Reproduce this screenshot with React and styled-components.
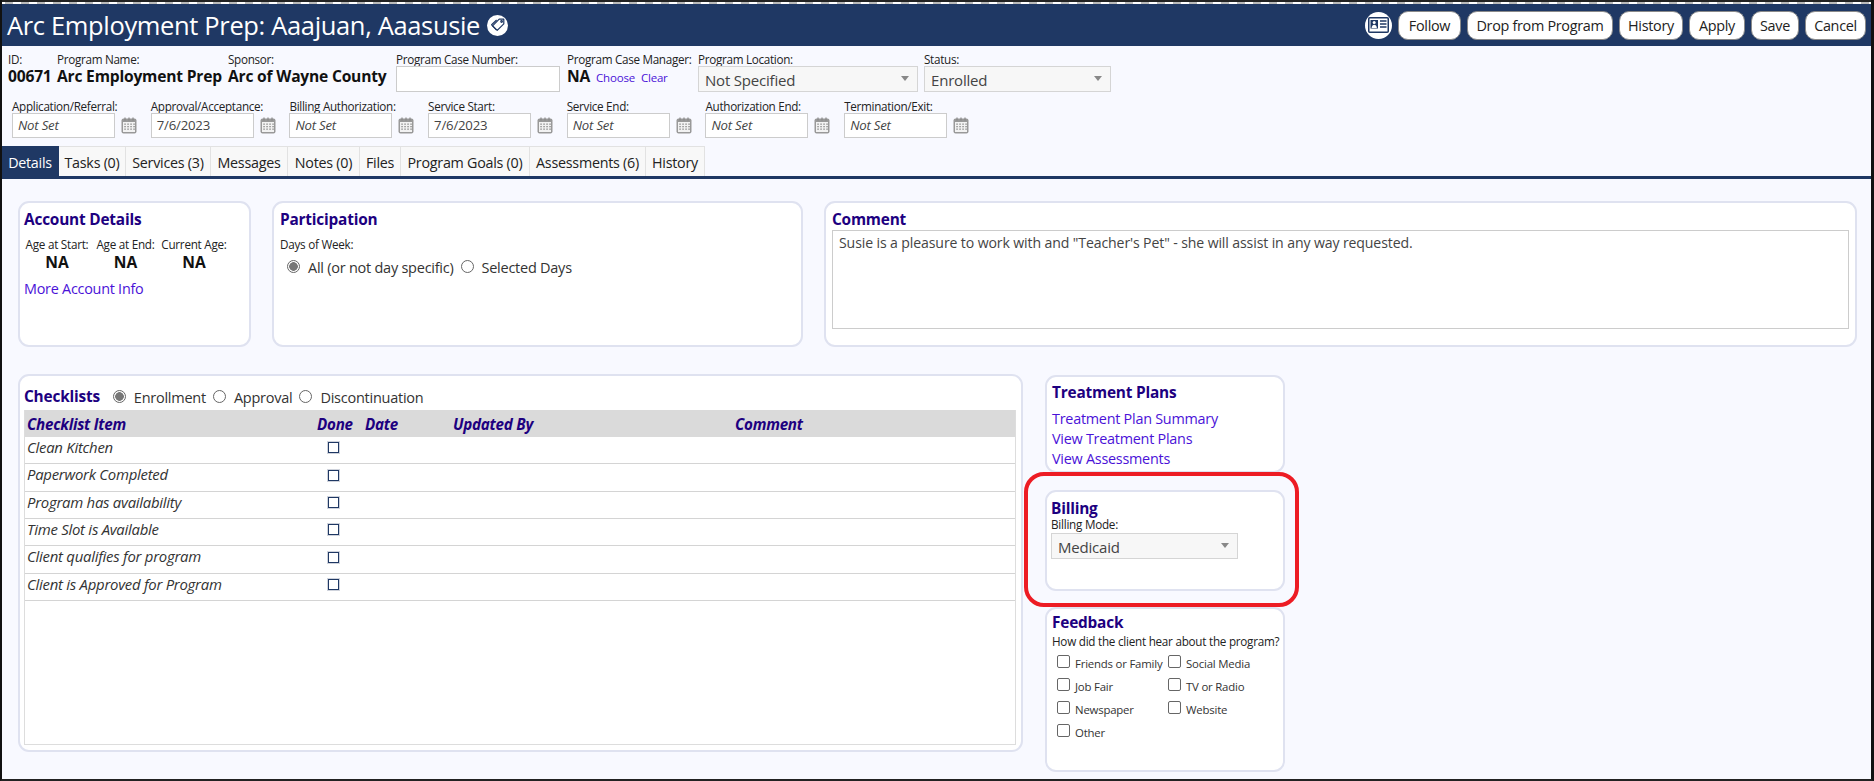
import React from "react";
import styled, { createGlobalStyle } from "styled-components";

const FONT = `"Open Sans", "Noto Sans", "Liberation Sans", sans-serif`;
const NAVY = "#1f3864";
const HEAD = "#1d0080";
const LINK = "#4a12d8";

const Global = createGlobalStyle`
  html, body { margin: 0; padding: 0; background: #f8f9ff; }
  body { font-family: ${FONT}; color: #222; overflow: hidden; }
  * { box-sizing: border-box; }
`;

const Page = styled.div`
  width: 1874px; height: 781px;
  border-left: 2px solid #111; border-right: 3px solid #111; border-bottom: 2px solid #222;
  background: #f8f9ff; overflow: hidden;
  display: flex; flex-direction: column;
`;
const TopStrip = styled.div`
  height: 4px; flex: none;
  background: repeating-linear-gradient(90deg, #fff 0 3px, #bbb 3px 11px, #fff 11px 16px);
  border-top: 2px solid #222;
`;
const Header = styled.header`
  height: 42px; flex: none; background: ${NAVY};
  display: flex; align-items: center; justify-content: space-between;
  padding: 0 5px 0 5px;
`;
const TitleWrap = styled.div`display: flex; align-items: center; gap: 7px;`;
const Title = styled.h1`
  margin: 0; font-size: 25.5px; font-weight: 400; color: #fff; letter-spacing: -0.35px; white-space: nowrap;
`;
const Actions = styled.div`display: flex; align-items: center; gap: 6px;`;
const CircleIcon = styled.span`
  width: ${p => p.$size}px; height: ${p => p.$size}px; border-radius: 50%; background: #fff;
  display: inline-flex; align-items: center; justify-content: center; flex: none;
`;
const Btn = styled.button`
  height: 29px; width: ${p => p.$w}px; padding: 0; border: 1px solid #8a8a8a; border-radius: 10px;
  background: #fff; color: #222; font: 400 14.4px ${FONT}; letter-spacing: -0.3px;
`;

const Meta = styled.section`
  flex: none; height: 100px; padding-top: 6px;
  display: flex; flex-direction: column;
`;
const MetaRow = styled.div`
  display: flex; align-items: flex-start; padding-left: ${p => p.$pl}px; margin-top: ${p => p.$mt || 0}px;
`;
const Field = styled.div`width: ${p => p.$w}px; flex: none; display: flex; flex-direction: column;`;
const Label = styled.label`
  font-size: 11.7px; line-height: 14px; letter-spacing: -0.3px; color: #222; white-space: nowrap; display: block;
`;
const Value = styled.div`
  font-size: 15.6px; font-weight: 700; color: #111; line-height: 20px; white-space: nowrap; letter-spacing: -0.2px;
`;
const TextBox = styled.div`
  width: ${p => p.$w}px; height: ${p => p.$h}px; background: #fff; border: 1px solid #ccc; flex: none;
  font-size: 13.2px; line-height: ${p => p.$h - 2}px; padding-left: 5px; color: #444;
  font-style: ${p => (p.$empty ? "italic" : "normal")}; letter-spacing: -0.2px;
`;
const SelectBox = styled.div`
  width: ${p => p.$w}px; height: 26px; background: #f7f7f7; border: 1px solid #d5d5d5;
  display: flex; align-items: center; justify-content: space-between; padding: 1px 6px 0 6px;
  font-size: 15px; color: #444; letter-spacing: -0.2px;
  &::after { content: ""; border: 4px solid transparent; border-top: 5px solid #888; border-bottom: 0; margin-right: 2px; margin-top: -3px;}
`;
const ManagerLine = styled.div`display: flex; align-items: baseline; gap: 6px;`;
const SmallLink = styled.a`font-size: 11.5px; color: ${LINK}; letter-spacing: -0.2px;`;
const DateField = styled.div`width: 138.7px; flex: none;`;
const DateControl = styled.div`display: flex; align-items: center; gap: 6px;`;

const Tabs = styled.nav`
  flex: none; height: 33px; display: flex; border-bottom: 3px solid ${NAVY};
`;
const Tab = styled.div`
  width: ${p => p.$w}px; height: 30px; flex: none; text-align: center; line-height: 32px;
  font-size: 14.3px; letter-spacing: -0.25px; white-space: nowrap;
  background: ${p => (p.$active ? NAVY : "#f8f8f8")}; color: ${p => (p.$active ? "#fff" : "#222")};
  border: 1px solid ${p => (p.$active ? NAVY : "#e2e2e2")}; border-bottom: 0; border-left: 0;
`;

const Main = styled.main`flex: 1; padding: 22px 0 0 16px; display: flex; flex-direction: column; gap: 27px;`;
const TopRow = styled.div`display: flex; gap: 21px;`;
const BottomRow = styled.div`display: flex; gap: 22px; align-items: flex-start;`;
const Card = styled.div`
  width: ${p => p.$w}px; height: ${p => p.$h}px; flex: none; position: relative;
  background: #fff; border: 2px solid #dfe2f0; border-radius: 11px;
  padding: ${p => p.$pad};
`;
const CardTitle = styled.h2`
  margin: 0; font-size: 15.4px; line-height: 20px; font-weight: 700; color: ${HEAD}; letter-spacing: -0.2px; white-space: nowrap;
`;
const AgeRow = styled.div`display: flex; margin-top: 7px;`;
const AgeCol = styled.div`width: ${p => p.$w}px; flex: none; text-align: center;`;
const AgeValue = styled.div`font-size: 15.6px; font-weight: 700; line-height: 20px; margin-top: 1px; color: #111;`;
const BigLink = styled.a`display: block; font-size: 14.4px; line-height: 20px; color: ${LINK}; letter-spacing: -0.25px; white-space: nowrap;`;
const AccountLink = styled(BigLink)`margin-top: 7px;`;
const LinkList = styled.div`margin-top: 6px;`;
const RadioRow = styled.div`
  display: flex; align-items: center; gap: 7px; font-size: 14.5px; color: #333; letter-spacing: -0.25px;
  margin: ${p => p.$m || 0};
`;
const RadioItem = styled.label`display: inline-flex; align-items: center; gap: 8px; white-space: nowrap;`;
const Radio = styled.input.attrs({ type: "radio" })`
  appearance: none; margin: 0; width: 13px; height: 13px; border-radius: 50%; border: 1px solid #666; background: #fff; flex: none;
  position: relative; top: -1px;
  &:checked { background: radial-gradient(circle, #777 0 4px, #fff 4.6px); }
`;
const CommentArea = styled.div`
  width: 100%; height: 99px; border: 1px solid #ccc; padding: 2px 6px; font-size: 14.1px; line-height: 20px; color: #444;
  letter-spacing: -0.12px;
`;

const ChecklistHead = styled.div`display: flex; align-items: center; gap: 13px; height: 26px;`;
const Table = styled.div`
  width: 992px; height: 335px; border: 1px solid #ddd; border-top: 0;
`;
const TableCols = "290px 48px 88px 282px 1fr";
const TableHead = styled.div`
  height: 27px; background: #dadada; display: grid; grid-template-columns: ${TableCols}; align-items: center; padding-left: 2px;
  font-size: 15.2px; font-weight: 700; font-style: italic; color: ${HEAD}; letter-spacing: -0.25px; white-space: nowrap;
`;
const TableRow = styled.div`
  height: ${p => p.$h}px; border-bottom: 1px solid #d4d4d4; display: grid; grid-template-columns: ${TableCols}; align-items: center; padding: 0 0 5px 2px;
  font-size: 14.9px; font-style: italic; color: #333; letter-spacing: -0.25px; white-space: nowrap;
`;
const RowText = styled.span`position: relative; top: -1px;`;
const DoneBox = styled.span`
  width: 13px; height: 13px; border: 2px solid ${NAVY}; outline: 1px solid #cfd3dc; outline-offset: -1px; background: #fff; display: block; margin-left: 10px;
`;

const Side = styled.div`width: 240px; flex: none; display: flex; flex-direction: column; margin-top: 1px;`;
const SideCard = styled(Card)`margin-bottom: ${p => p.$mb || 0}px;`;
const Annotation = styled.div`
  position: absolute; top: -20px; right: -16px; bottom: -18px; left: -23px;
  border: 4.5px solid #ed1c24; border-radius: 20px; pointer-events: none;
`;
const FieldLabel = styled.div`
  font-size: 11.7px; line-height: 14px; color: #222; letter-spacing: -0.25px; white-space: nowrap;
  margin-top: ${p => p.$mt || 0}px; margin-bottom: ${p => p.$mb || 0}px;
`;
const CheckGrid = styled.div`display: grid; grid-template-columns: 111px 1fr; grid-auto-rows: 23px; margin: 4px 0 0 5px;`;
const CheckItem = styled.label`display: flex; align-items: center; gap: 5px; font-size: 11.4px; color: #333; white-space: nowrap; letter-spacing: -0.2px;`;
const Check = styled.input.attrs({ type: "checkbox" })`
  appearance: none; margin: -4px 0 0; width: 13px; height: 13px; border: 1px solid #666; border-radius: 2px; background: #fff; flex: none;
`;
const CalSvg = styled.svg`flex: none;`;

const TagIcon = () => (
  <CircleIcon $size={21}>
    <svg width="16" height="16" viewBox="0 0 16 16" fill="none" stroke={NAVY} strokeWidth="1.2" strokeLinejoin="round">
      <path d="M9.200 2.200h4.600v4.600L7.200 13.400 2.600 8.800z" />
      <path d="M6.600 3l-5 4.800 4.800 5" />
      <circle cx="11.600" cy="4.500" r=".8" />
    </svg>
  </CircleIcon>
);
const CardIcon = () => (
  <CircleIcon $size={27}>
    <svg width="21" height="16" viewBox="0 0 21 16">
      <rect x=".75" y=".75" width="19.5" height="14.5" rx="1" fill="#fff" stroke={NAVY} strokeWidth="1.5" />
      <rect x="2.5" y="3" width="7.5" height="8.5" fill={NAVY} />
      <circle cx="6.2" cy="5.6" r="1.5" fill="#fff" />
      <path d="M3.6 11c.3-2.4 1.3-3.2 2.6-3.2S8.6 8.600 8.900 11z" fill="#fff" />
      <path d="M12 4h6.500M12 7h6.500M12 10h6.500" stroke={NAVY} strokeWidth="1.4" />
    </svg>
  </CircleIcon>
);
const CalIcon = () => (
  <CalSvg width="16" height="17" viewBox="0 0 16 17">
    <rect x=".5" y="1.500" width="15" height="15" rx="2" fill="#999" />
    <rect x="2" y="5" width="12" height="10" fill="#f2f2f2" />
    <path d="M4 .5v3M8 .5v3M12 .5v3" stroke="#888" strokeWidth="1.2" />
    <g fill="#808080">
      {[3.5, 6.5, 9.5, 12.5].flatMap(x => [6.500, 9, 11.500].map(y => (
        <rect key={`${x}-${y}`} x={x - 0.1} y={y} width="1.300" height="1.300" />
      )))}
    </g>
  </CalSvg>
);

const DATES = [
  ["Application/Referral:", "Not Set"], ["Approval/Acceptance:", "7/6/2023"], ["Billing Authorization:", "Not Set"],
  ["Service Start:", "7/6/2023"], ["Service End:", "Not Set"], ["Authorization End:", "Not Set"], ["Termination/Exit:", "Not Set"],
];
const TABS = [
  ["Details", 57, true], ["Tasks (0)", 67], ["Services (3)", 85], ["Messages", 77], ["Notes (0)", 72], ["Files", 41],
  ["Program Goals (0)", 129], ["Assessments (6)", 116], ["History", 59],
];
const ITEMS = [
  ["Clean Kitchen", 27], ["Paperwork Completed", 28], ["Program has availability", 27],
  ["Time Slot is Available", 27], ["Client qualifies for program", 28], ["Client is Approved for Program", 27],
];
const SOURCES = ["Friends or Family", "Social Media", "Job Fair", "TV or Radio", "Newspaper", "Website", "Other"];

export default function App() {
  return (
    <Page>
      <Global />
      <TopStrip />
      <Header>
        <TitleWrap>
          <Title>Arc Employment Prep: Aaajuan, Aaasusie</Title>
          <TagIcon />
        </TitleWrap>
        <Actions>
          <CardIcon />
          <Btn $w={63}>Follow</Btn>
          <Btn $w={146}>Drop from Program</Btn>
          <Btn $w={64}>History</Btn>
          <Btn $w={56}>Apply</Btn>
          <Btn $w={48}>Save</Btn>
          <Btn $w={61}>Cancel</Btn>
        </Actions>
      </Header>
      <Meta>
        <MetaRow $pl={6}>
          <Field $w={49}><Label>ID:</Label><Value>00671</Value></Field>
          <Field $w={171}><Label>Program Name:</Label><Value>Arc Employment Prep</Value></Field>
          <Field $w={168}><Label>Sponsor:</Label><Value>Arc of Wayne County</Value></Field>
          <Field $w={171}><Label>Program Case Number:</Label><TextBox $w={164} $h={26} /></Field>
          <Field $w={131}>
            <Label>Program Case Manager:</Label>
            <ManagerLine><Value>NA</Value><SmallLink>Choose</SmallLink><SmallLink>Clear</SmallLink></ManagerLine>
          </Field>
          <Field $w={226}><Label>Program Location:</Label><SelectBox $w={220}>Not Specified</SelectBox></Field>
          <Field $w={187}><Label>Status:</Label><SelectBox $w={187}>Enrolled</SelectBox></Field>
        </MetaRow>
        <MetaRow $pl={10} $mt={7}>
          {DATES.map(([label, value]) => (
            <DateField key={label}>
              <Label>{label}</Label>
              <DateControl>
                <TextBox $w={103} $h={25} $empty={value === "Not Set"}>{value}</TextBox>
                <CalIcon />
              </DateControl>
            </DateField>
          ))}
        </MetaRow>
      </Meta>
      <Tabs>
        {TABS.map(([t, w, a]) => <Tab key={t} $w={w} $active={a}>{t}</Tab>)}
      </Tabs>
      <Main>
        <TopRow>
          <Card $w={233} $h={146} $pad="7px 4px">
            <CardTitle>Account Details</CardTitle>
            <AgeRow>
              <AgeCol $w={66}><FieldLabel>Age at Start:</FieldLabel><AgeValue>NA</AgeValue></AgeCol>
              <AgeCol $w={71}><FieldLabel>Age at End:</FieldLabel><AgeValue>NA</AgeValue></AgeCol>
              <AgeCol $w={66}><FieldLabel>Current Age:</FieldLabel><AgeValue>NA</AgeValue></AgeCol>
            </AgeRow>
            <AccountLink>More Account Info</AccountLink>
          </Card>
          <Card $w={531} $h={146} $pad="7px 6px">
            <CardTitle>Participation</CardTitle>
            <FieldLabel $mt={7}>Days of Week:</FieldLabel>
            <RadioRow $m="7px 0 0 7px">
              <RadioItem><Radio name="d" defaultChecked />All (or not day specific)</RadioItem>
              <RadioItem><Radio name="d" />Selected Days</RadioItem>
            </RadioRow>
          </Card>
          <Card $w={1033} $h={146} $pad="7px 6px">
            <CardTitle>Comment</CardTitle>
            <CommentArea>Susie is a pleasure to work with and "Teacher's Pet" - she will assist in any way requested.</CommentArea>
          </Card>
        </TopRow>
        <BottomRow>
          <Card $w={1005} $h={378} $pad="8px 4px">
            <ChecklistHead>
              <CardTitle>Checklists</CardTitle>
              <RadioRow>
                <RadioItem><Radio name="c" defaultChecked />Enrollment</RadioItem>
                <RadioItem><Radio name="c" />Approval</RadioItem>
                <RadioItem><Radio name="c" />Discontinuation</RadioItem>
              </RadioRow>
            </ChecklistHead>
            <Table>
              <TableHead><span>Checklist Item</span><span>Done</span><span>Date</span><span>Updated By</span><span>Comment</span></TableHead>
              {ITEMS.map(([t, h]) => (
                <TableRow key={t} $h={h}><RowText>{t}</RowText><DoneBox /></TableRow>
              ))}
            </Table>
          </Card>
          <Side>
            <SideCard $w={240} $h={98} $pad="6px 5px" $mb={17}>
              <CardTitle>Treatment Plans</CardTitle>
              <LinkList>
                <BigLink>Treatment Plan Summary</BigLink>
                <BigLink>View Treatment Plans</BigLink>
                <BigLink>View Assessments</BigLink>
              </LinkList>
            </SideCard>
            <SideCard $w={240} $h={101} $pad="7px 4px" $mb={16}>
              <CardTitle>Billing</CardTitle>
              <FieldLabel $mt={-2} $mb={2}>Billing Mode:</FieldLabel>
              <SelectBox $w={187}>Medicaid</SelectBox>
              <Annotation />
            </SideCard>
            <SideCard $w={240} $h={165} $pad="4px 5px">
              <CardTitle>Feedback</CardTitle>
              <FieldLabel $mt={1}>How did the client hear about the program?</FieldLabel>
              <CheckGrid>
                {SOURCES.map(s => <CheckItem key={s}><Check />{s}</CheckItem>)}
              </CheckGrid>
            </SideCard>
          </Side>
        </BottomRow>
      </Main>
    </Page>
  );
}
